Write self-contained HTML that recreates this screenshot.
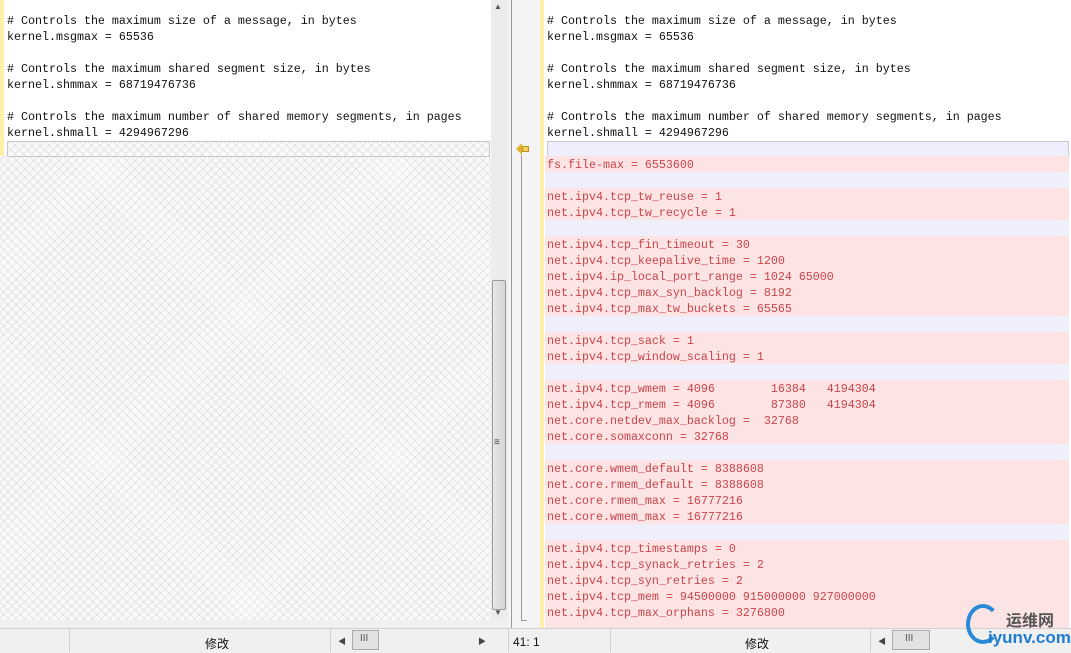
<!DOCTYPE html>
<html><head><meta charset="utf-8"><style>
body{margin:0;width:1071px;height:652px;overflow:hidden;background:#f0f0f0;position:relative;font-family:"Liberation Mono",monospace;font-size:11.67px}
.a{position:absolute}
.ln{position:absolute;height:16px;line-height:16px;white-space:pre;color:#111;padding-top:1px;box-sizing:border-box}
.hatch{background-color:#fafafa;background-image:repeating-linear-gradient(45deg,#e4e4e4 0 1px,transparent 1px 6px),repeating-linear-gradient(-45deg,#e4e4e4 0 1px,transparent 1px 6px)}
.p{background:#fde4e4;color:#c8454a}
.v{background:#eeeefc}
.sb{font-family:"Liberation Sans","Noto Sans CJK SC",sans-serif;font-size:12px;color:#111}
</style></head><body>
<div class="a" style="left:0;top:0;width:491px;height:620px;background:#fff"></div>
<div class="a hatch" style="left:0;top:156px;width:491px;height:464px"></div>
<div class="a" style="left:0;top:0;width:4px;height:156px;background:#fbf0a8"></div>
<div class="ln" style="left:7px;top:12px"># Controls the maximum size of a message, in bytes</div>
<div class="ln" style="left:7px;top:28px">kernel.msgmax = 65536</div>
<div class="ln" style="left:7px;top:60px"># Controls the maximum shared segment size, in bytes</div>
<div class="ln" style="left:7px;top:76px">kernel.shmmax = 68719476736</div>
<div class="ln" style="left:7px;top:108px"># Controls the maximum number of shared memory segments, in pages</div>
<div class="ln" style="left:7px;top:124px">kernel.shmall = 4294967296</div>
<div class="a hatch" style="left:7px;top:141px;width:481px;height:14px;border:1px solid #c8c8c8"></div>
<div class="a" style="left:491px;top:0;width:17px;height:620px;background:#ececec"></div>
<div class="a sb" style="left:494px;top:2px;font-size:8px;color:#555">▲</div>
<div class="a" style="left:492px;top:280px;width:14px;height:330px;background:linear-gradient(90deg,#e6e6e6,#d6d6d6);border:1px solid #999;border-radius:2px;box-sizing:border-box"></div>
<div class="a sb" style="left:494px;top:437px;font-size:10px;color:#444">≡</div>
<div class="a sb" style="left:494px;top:608px;font-size:8px;color:#555">▼</div>
<div class="a" style="left:508px;top:0;width:32px;height:628px;background:#f4f4f4"></div>
<div class="a" style="left:511px;top:0;width:1px;height:628px;background:#999"></div>
<div class="a" style="left:521px;top:155px;width:1px;height:466px;background:#999"></div>
<div class="a" style="left:521px;top:620px;width:6px;height:1px;background:#999"></div>
<div class="a" style="left:516px;top:143px;width:0;height:0;border-top:6px solid transparent;border-bottom:6px solid transparent;border-right:6px solid #e0b030"></div>
<div class="a" style="left:522px;top:146px;width:7px;height:6px;background:#f5d060;border:1px solid #c09020;box-sizing:border-box"></div>
<div class="a" style="left:540px;top:0;width:531px;height:628px;background:#fff"></div>
<div class="a" style="left:540px;top:0;width:4px;height:628px;background:#fbf0a8"></div>
<div class="ln" style="left:547px;top:12px"># Controls the maximum size of a message, in bytes</div>
<div class="ln" style="left:547px;top:28px">kernel.msgmax = 65536</div>
<div class="ln" style="left:547px;top:60px"># Controls the maximum shared segment size, in bytes</div>
<div class="ln" style="left:547px;top:76px">kernel.shmmax = 68719476736</div>
<div class="ln" style="left:547px;top:108px"># Controls the maximum number of shared memory segments, in pages</div>
<div class="ln" style="left:547px;top:124px">kernel.shmall = 4294967296</div>
<div class="a v" style="left:547px;top:141px;width:520px;height:14px;border:1px solid #c8c8d8"></div>
<div class="ln p" style="left:545px;top:156px;width:524px;padding-left:2px">fs.file-max = 6553600</div>
<div class="ln v" style="left:545px;top:172px;width:524px"></div>
<div class="ln p" style="left:545px;top:188px;width:524px;height:32px;padding-left:2px">net.ipv4.tcp_tw_reuse = 1
net.ipv4.tcp_tw_recycle = 1</div>
<div class="ln v" style="left:545px;top:220px;width:524px"></div>
<div class="ln p" style="left:545px;top:236px;width:524px;height:80px;padding-left:2px">net.ipv4.tcp_fin_timeout = 30
net.ipv4.tcp_keepalive_time = 1200
net.ipv4.ip_local_port_range = 1024 65000
net.ipv4.tcp_max_syn_backlog = 8192
net.ipv4.tcp_max_tw_buckets = 65565</div>
<div class="ln v" style="left:545px;top:316px;width:524px"></div>
<div class="ln p" style="left:545px;top:332px;width:524px;height:32px;padding-left:2px">net.ipv4.tcp_sack = 1
net.ipv4.tcp_window_scaling = 1</div>
<div class="ln v" style="left:545px;top:364px;width:524px"></div>
<div class="ln p" style="left:545px;top:380px;width:524px;height:64px;padding-left:2px">net.ipv4.tcp_wmem = 4096        16384   4194304
net.ipv4.tcp_rmem = 4096        87380   4194304
net.core.netdev_max_backlog =  32768
net.core.somaxconn = 32768</div>
<div class="ln v" style="left:545px;top:444px;width:524px"></div>
<div class="ln p" style="left:545px;top:460px;width:524px;height:64px;padding-left:2px">net.core.wmem_default = 8388608
net.core.rmem_default = 8388608
net.core.rmem_max = 16777216
net.core.wmem_max = 16777216</div>
<div class="ln v" style="left:545px;top:524px;width:524px"></div>
<div class="ln p" style="left:545px;top:540px;width:524px;height:88px;padding-left:2px">net.ipv4.tcp_timestamps = 0
net.ipv4.tcp_synack_retries = 2
net.ipv4.tcp_syn_retries = 2
net.ipv4.tcp_mem = 94500000 915000000 927000000
net.ipv4.tcp_max_orphans = 3276800</div>
<div class="a" style="left:0;top:628px;width:1071px;height:24px;background:#f0f0f0;border-top:1px solid #d0d0d0"></div>
<div class="a" style="left:69px;top:629px;width:1px;height:23px;background:#d0d0d0"></div>
<div class="a" style="left:330px;top:629px;width:1px;height:23px;background:#d0d0d0"></div>
<div class="a sb" style="left:205px;top:635px">修改</div>
<div class="a sb" style="left:338px;top:636px;font-size:8px;color:#444">◀</div>
<div class="a" style="left:352px;top:630px;width:27px;height:20px;background:#e2e2e2;border:1px solid #aaa;box-sizing:border-box"></div>
<div class="a sb" style="left:360px;top:633px;font-size:10px;color:#555">III</div>
<div class="a sb" style="left:478px;top:636px;font-size:8px;color:#444">▶</div>
<div class="a" style="left:508px;top:629px;width:1px;height:23px;background:#d0d0d0"></div>
<div class="a" style="left:610px;top:629px;width:1px;height:23px;background:#d0d0d0"></div>
<div class="a" style="left:870px;top:629px;width:1px;height:23px;background:#d0d0d0"></div>
<div class="a sb" style="left:513px;top:635px">41: 1</div>
<div class="a sb" style="left:745px;top:635px">修改</div>
<div class="a sb" style="left:878px;top:636px;font-size:8px;color:#444">◀</div>
<div class="a" style="left:892px;top:630px;width:38px;height:20px;background:#e2e2e2;border:1px solid #aaa;box-sizing:border-box"></div>
<div class="a sb" style="left:905px;top:633px;font-size:10px;color:#555">III</div>
<div class="a" style="left:966px;top:604px;width:34px;height:40px;border:4px solid #2a8ad8;border-right-color:transparent;border-radius:50%;box-sizing:border-box"></div>
<div class="a sb" style="left:1006px;top:607px;font-size:16px;color:#555;font-weight:bold">运维网</div>
<div class="a sb" style="left:988px;top:628px;font-size:17px;color:#1f7cd0;font-weight:bold">iyunv.com</div>
</body></html>
